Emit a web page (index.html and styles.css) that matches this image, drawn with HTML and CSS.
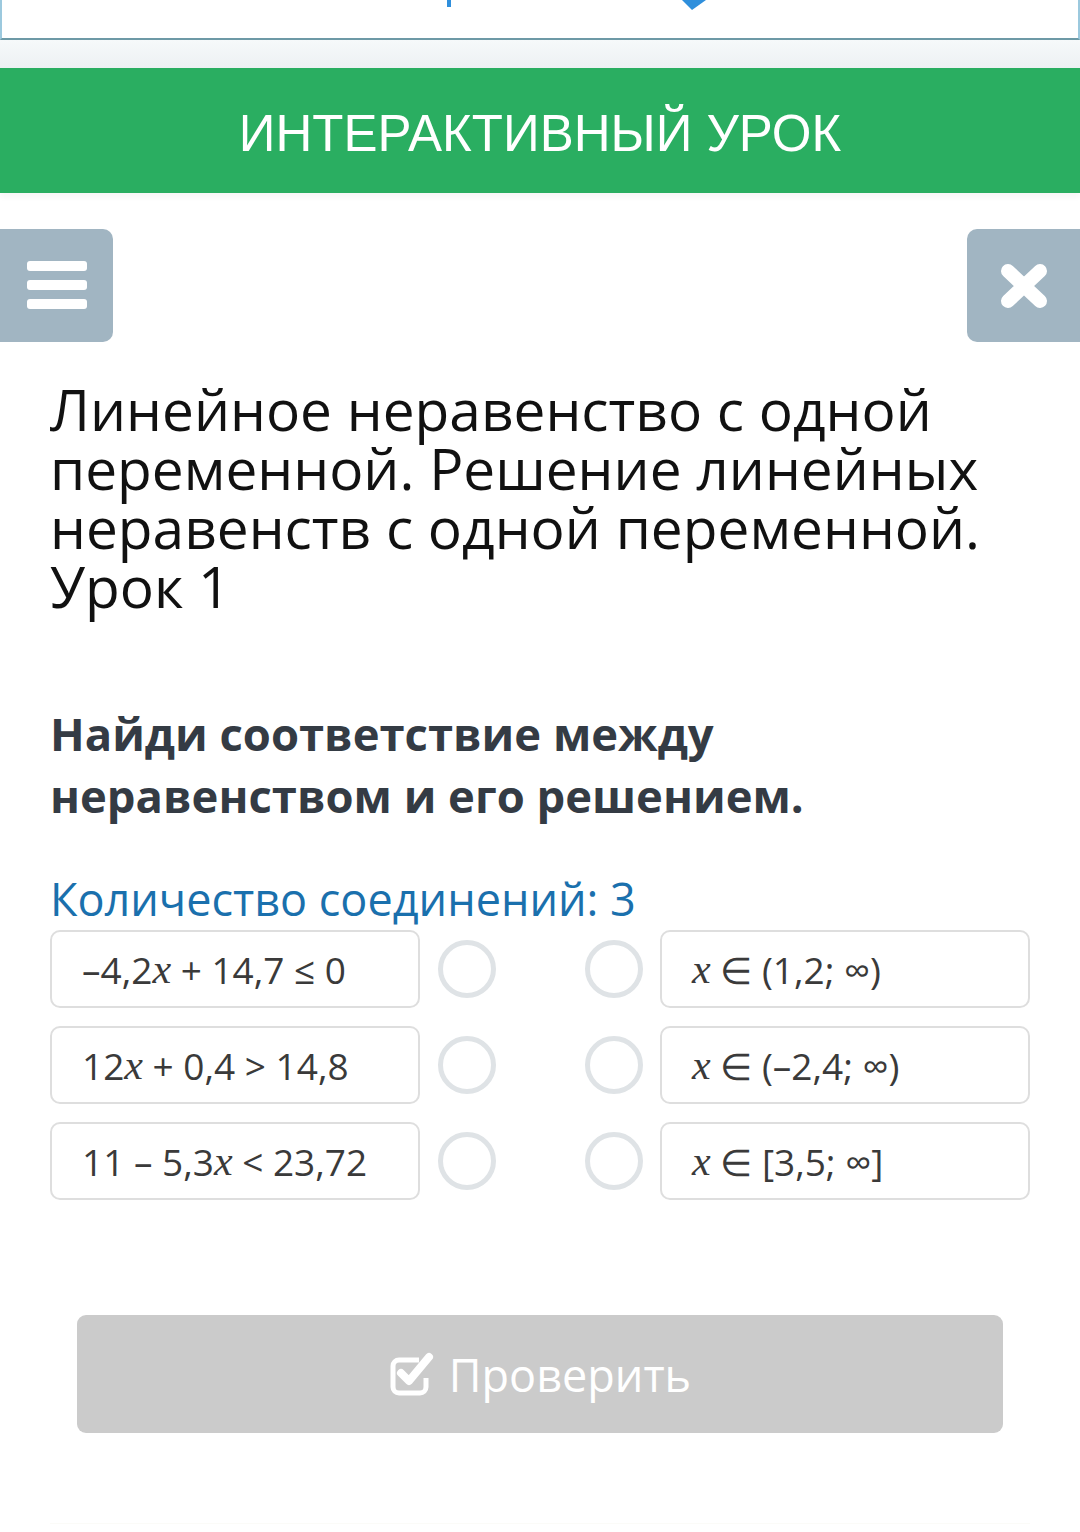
FILE: index.html
```html
<!DOCTYPE html>
<html lang="ru">

<head>
     <meta charset="UTF-8">
     <meta name="viewport" content="width=device-width, initial-scale=1.0">
     <title>Интерактивный урок</title>
     <link rel="stylesheet" href="styles.css">
</head>

<body>
     <div class="top-frame">
          <svg class="top-marks" width="1076" height="12" viewBox="0 0 1076 12">
               <rect x="445" y="0" width="4" height="7" fill="#2f8fdc" />
               <path d="M680 0 L704 0 L690 10 Z" fill="#2f8fdc" />
          </svg>
     </div>
     <div class="top-gap"></div>

     <header class="lesson-bar">ИНТЕРАКТИВНЫЙ УРОК</header>

     <div class="toolbar">
          <button class="tool-btn tool-menu" aria-label="Меню">
               <svg width="60" height="50" viewBox="0 0 60 50">
                    <rect x="0" y="0" width="60" height="10" rx="3" fill="#fff" />
                    <rect x="0" y="19" width="60" height="10" rx="3" fill="#fff" />
                    <rect x="0" y="38" width="60" height="10" rx="3" fill="#fff" />
               </svg>
          </button>
          <button class="tool-btn tool-close" aria-label="Закрыть">
               <svg width="50" height="44" viewBox="0 0 50 44">
                    <path d="M9 7 L41 37 M41 7 L9 37" stroke="#fff" stroke-width="14" stroke-linecap="round" />
               </svg>
          </button>
     </div>

     <main class="content">
          <h1 class="lesson-title">Линейное неравенство с одной переменной. Решение линейных неравенств с одной
               переменной. Урок 1</h1>

          <h2 class="task">Найди соответствие между<br>неравенством и его решением.</h2>

          <p class="links-count">Количество соединений: 3</p>

          <div class="match">
               <div class="match-row">
                    <div class="match-card">–4,2<i class="mx">x</i> + 14,7 ≤ 0</div>
                    <div class="dots"><span class="dot"></span><span class="dot"></span></div>
                    <div class="match-card"><i class="mx">x</i> ∈ (1,2; ∞)</div>
               </div>
               <div class="match-row">
                    <div class="match-card">12<i class="mx">x</i> + 0,4 &gt; 14,8</div>
                    <div class="dots"><span class="dot"></span><span class="dot"></span></div>
                    <div class="match-card"><i class="mx">x</i> ∈ (–2,4; ∞)</div>
               </div>
               <div class="match-row">
                    <div class="match-card">11 – 5,3<i class="mx">x</i> &lt; 23,72</div>
                    <div class="dots"><span class="dot"></span><span class="dot"></span></div>
                    <div class="match-card"><i class="mx">x</i> ∈ [3,5; ∞]</div>
               </div>
          </div>

          <button class="check-btn">
               <svg class="check-icon" width="48" height="46" viewBox="0 0 48 46">
                    <path d="M30 9 H10 a6 6 0 0 0 -6 6 V36 a6 6 0 0 0 6 6 H31 a6 6 0 0 0 6 -6 V27" fill="none"
                         stroke="#fff" stroke-width="5" />
                    <path d="M12 22 L20 30 L40 6" fill="none" stroke="#fff" stroke-width="8" stroke-linecap="round"
                         stroke-linejoin="round" />
               </svg>
               <span>Проверить</span>
          </button>
     </main>

     <div class="bottom-line"></div>
</body>

</html>
```

FILE: styles.css
```css
body {
     font-family: "Open Sans", Arial, sans-serif;
     margin: 0;
     padding: 0;
     background-color: #fff;
     color: #111;
}

.top-frame {
     height: 40px;
     box-sizing: border-box;
     border: 2px solid #9cc9de;
     border-top: none;
     border-bottom-color: #6d99a6;
     background-color: #fff;
     overflow: hidden;
}

.top-marks {
     display: block;
}

.top-gap {
     height: 28px;
     background: linear-gradient(#f6f9fa, #edf1f3);
}

.lesson-bar {
     height: 125px;
     box-sizing: border-box;
     padding-top: 5px;
     background-color: #2aae61;
     color: #fff;
     font-family: "Liberation Sans", Arial, sans-serif;
     font-size: 51px;
     display: flex;
     align-items: center;
     justify-content: center;
     box-shadow: 0 4px 6px rgba(0, 0, 0, 0.04);
}

.toolbar {
     display: flex;
     justify-content: space-between;
     margin-top: 36px;
}

.tool-btn {
     width: 113px;
     height: 113px;
     border: none;
     padding: 0;
     background-color: #a1b5c2;
     display: flex;
     align-items: center;
     justify-content: center;
}

.tool-menu {
     border-radius: 0 10px 10px 0;
}

.tool-close {
     border-radius: 10px 0 0 10px;
}

.content {
     padding: 0 50px;
}

.lesson-title {
     margin: 38px 0 0;
     font-size: 56.8px;
     line-height: 59px;
     font-weight: 400;
     color: #111;
}

.task {
     margin: 86px 0 0;
     font-size: 45.4px;
     line-height: 62px;
     font-weight: 700;
     color: #343b44;
}

.links-count {
     margin: 45px 0 0;
     font-size: 45px;
     line-height: 56px;
     color: #1a70ad;
}

.match {
     display: flex;
     flex-direction: column;
     gap: 18px;
     margin-top: 3px;
}

.match-row {
     display: grid;
     grid-template-columns: 370px 1fr 370px;
     height: 78px;
}

.match-card {
     box-sizing: border-box;
     border: 2px solid #dedede;
     border-radius: 10px;
     padding: 0 30px;
     display: flex;
     align-items: center;
     font-size: 37px;
     color: #3a3a3a;
     white-space: pre;
}

.mx {
     font-family: "Liberation Serif", serif;
     font-style: italic;
     font-size: 42px;
}

.dots {
     display: flex;
     align-items: center;
     justify-content: space-between;
     padding: 0 17px 0 18px;
}

.dot {
     width: 58px;
     height: 58px;
     box-sizing: border-box;
     border: 5px solid #dfe3e6;
     border-radius: 50%;
}

.check-btn {
     display: flex;
     align-items: center;
     justify-content: center;
     gap: 12px;
     width: calc(100% - 54px);
     margin: 115px 27px 0;
     height: 118px;
     border: none;
     border-radius: 9px;
     background-color: #cbcbcb;
     color: #fff;
     font-family: "Open Sans", Arial, sans-serif;
     font-size: 45px;
}

.bottom-line {
     margin: 90px 50px 0;
     height: 1px;
     background-color: #fbfbf8;
}
```
